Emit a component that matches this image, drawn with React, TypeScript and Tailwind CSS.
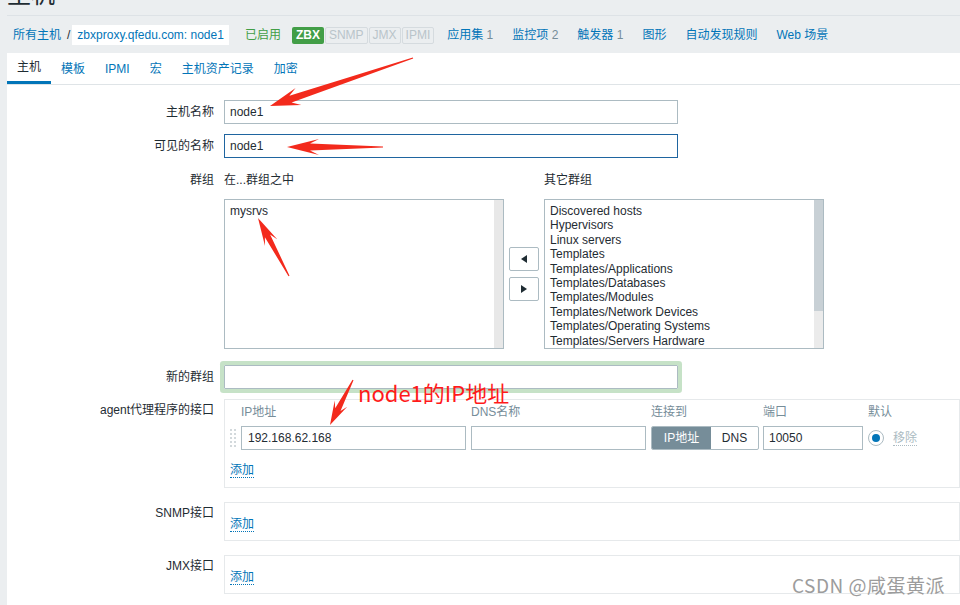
import React from 'react';

const tabs = ['主机', '模板', 'IPMI', '宏', '主机资产记录', '加密'];

const navLinks: [string, string][] = [
  ['应用集', '1'],
  ['监控项', '2'],
  ['触发器', '1'],
  ['图形', ''],
  ['自动发现规则', ''],
  ['Web 场景', ''],
];

const otherGroups = [
  'Discovered hosts',
  'Hypervisors',
  'Linux servers',
  'Templates',
  'Templates/Applications',
  'Templates/Databases',
  'Templates/Modules',
  'Templates/Network Devices',
  'Templates/Operating Systems',
  'Templates/Servers Hardware',
  'Templates/Virtualization',
  'Virtual machines',
  'Zabbix servers',
];

// 红色标注箭头：从尾部到箭头尖端
function arrowPoints(x1: number, y1: number, x2: number, y2: number, head: number, headW: number, shaftW: number) {
  const len = Math.hypot(x2 - x1, y2 - y1);
  const dx = (x2 - x1) / len;
  const dy = (y2 - y1) / len;
  const nx = -dy;
  const ny = dx;
  const bx = x2 - dx * head;
  const by = y2 - dy * head;
  const jx = x2 - dx * head * 0.72;
  const jy = y2 - dy * head * 0.72;
  const pts = [
    [x1 + nx * 0.6, y1 + ny * 0.6],
    [jx + nx * shaftW, jy + ny * shaftW],
    [bx + nx * headW, by + ny * headW],
    [x2, y2],
    [bx - nx * headW, by - ny * headW],
    [jx - nx * shaftW, jy - ny * shaftW],
    [x1 - nx * 0.6, y1 - ny * 0.6],
  ];
  return pts.map((p) => `${p[0].toFixed(1)},${p[1].toFixed(1)}`).join(' ');
}

function Label({ children, tall }: { children: React.ReactNode; tall?: boolean }) {
  return (
    <div className={`w-[207px] shrink-0 text-right ${tall ? 'leading-[24px]' : 'leading-[14px] pt-[4px]'}`}>
      {children}
    </div>
  );
}

function AddLink() {
  return (
    <span className="text-[#0275b8] leading-[14px] border-b border-dotted border-[#0275b8]">添加</span>
  );
}

export default function App() {
  return (
    <div className="relative flex flex-col w-[960px] h-[605px] overflow-hidden bg-[#ebeef0] text-[12px] text-[#1f2c33] font-['Liberation_Sans','Noto_Sans_CJK_SC',sans-serif]">
      {/* 页面标题 */}
      <div className="h-[16px] ml-[7px] shrink-0 border-b border-[#dde2e6]">
        <div className="mt-[-17px] text-[24px] leading-[24px]">主机</div>
      </div>

      {/* 面包屑 / 导航 */}
      <div className="mt-[9px] h-[20px] ml-[13px] flex items-center shrink-0 whitespace-nowrap">
        <span className="text-[#0275b8]">所有主机</span>
        <span className="ml-[6px] text-[#1f2c33]">/</span>
        <span className="ml-[2px] h-[20px] bg-white px-[5px] flex items-center text-[#0275b8]">zbxproxy.qfedu.com: node1</span>
        <span className="ml-[16px] text-[#429e47]">已启用</span>
        <div className="ml-[11px] flex items-center gap-[1px]">
          <span className="h-[17px] px-[4px] flex items-center bg-[#429e47] text-white font-bold rounded-[2px]">ZBX</span>
          <span className="h-[17px] px-[3px] flex items-center text-[#b9c4ca] border border-[#d5dbdf] rounded-[2px]">SNMP</span>
          <span className="h-[17px] px-[3px] flex items-center text-[#b9c4ca] border border-[#d5dbdf] rounded-[2px]">JMX</span>
          <span className="h-[17px] px-[3px] flex items-center text-[#b9c4ca] border border-[#d5dbdf] rounded-[2px]">IPMI</span>
        </div>
        <div className="ml-[13px] flex items-center gap-[19px]">
          {navLinks.map(([name, count]) => (
            <span key={name}>
              <span className="text-[#0275b8]">{name}</span>
              {count && <span className="text-[#768d99]"> {count}</span>}
            </span>
          ))}
        </div>
      </div>

      {/* 主面板 */}
      <div className="mt-[8px] ml-[7px] flex-1 bg-white">
        <div className="h-[32px] flex border-b border-[#dfe4e7]">
          {tabs.map((t, i) => (
            <div
              key={t}
              className={`px-[10px] flex items-center ${
                i === 0 ? 'border-b-[3px] border-[#0275b8] text-[#1f2c33]' : 'text-[#0275b8]'
              }`}
            >
              {t}
            </div>
          ))}
        </div>

        <div className="pt-[15px]">
          {/* 主机名称 */}
          <div className="flex">
            <Label tall>主机名称</Label>
            <div className="ml-[10px] w-[454px] h-[24px] border border-[#acbbc2] px-[5px] flex items-center">node1</div>
          </div>

          {/* 可见的名称 */}
          <div className="flex mt-[10px]">
            <Label tall>可见的名称</Label>
            <div className="ml-[10px] w-[454px] h-[24px] border border-[#1f65a0] px-[5px] flex items-center">node1</div>
          </div>

          {/* 群组 */}
          <div className="flex mt-[15px]">
            <div className="w-[207px] shrink-0 text-right leading-[14px]">群组</div>
            <div className="ml-[10px]">
              <div className="flex leading-[14px]">
                <div className="w-[320px]">在...群组之中</div>
                <div>其它群组</div>
              </div>
              <div className="flex mt-[12px]">
                <div className="w-[280px] h-[150px] border border-[#acbbc2] flex">
                  <div className="flex-1 pl-[5px] pt-[4px] leading-[14.4px]">mysrvs</div>
                  <div className="w-[9px] bg-[#e8e8e8]" />
                </div>
                <div className="w-[40px] flex flex-col items-center justify-center gap-[6px]">
                  <div className="w-[30px] h-[24px] border border-[#acbbc2] rounded-[2px] flex items-center justify-center">
                    <svg width="6" height="8" viewBox="0 0 6 8">
                      <polygon points="6,0 6,8 0,4" fill="#1f2c33" />
                    </svg>
                  </div>
                  <div className="w-[30px] h-[24px] border border-[#acbbc2] rounded-[2px] flex items-center justify-center">
                    <svg width="6" height="8" viewBox="0 0 6 8">
                      <polygon points="0,0 0,8 6,4" fill="#1f2c33" />
                    </svg>
                  </div>
                </div>
                <div className="w-[280px] h-[150px] border border-[#acbbc2] flex">
                  <div className="flex-1 pl-[5px] pt-[4px] leading-[14.4px] overflow-hidden whitespace-nowrap">
                    {otherGroups.map((g) => (
                      <div key={g}>{g}</div>
                    ))}
                  </div>
                  <div className="w-[9px] bg-[#ebebeb]">
                    <div className="h-[111px] bg-[#c8d0d5]" />
                  </div>
                </div>
              </div>
            </div>
          </div>

          {/* 新的群组 */}
          <div className="flex mt-[16px]">
            <Label tall>新的群组</Label>
            <div className="ml-[10px] w-[454px] h-[24px] border border-[#acbbc2] rounded-[1px] shadow-[0_0_0_4px_#c6e2c7]" />
          </div>

          {/* agent代理程序的接口 */}
          <div className="flex mt-[10px]">
            <Label>agent代理程序的接口</Label>
            <div className="ml-[10px] w-[760px] h-[89px] border border-[#e6e9eb] pl-[5px] pt-[5px]">
              <div className="flex leading-[14px] text-[#768d99]">
                <div className="w-[11px]" />
                <div className="w-[225px]">IP地址</div>
                <div className="ml-[5px] w-[175px]">DNS名称</div>
                <div className="ml-[5px] w-[107px]">连接到</div>
                <div className="ml-[5px] w-[100px]">端口</div>
                <div className="ml-[5px]">默认</div>
              </div>
              <div className="flex items-center mt-[7px] h-[24px]">
                <svg width="6" height="20" viewBox="0 0 6 20" className="shrink-0">
                  {[1, 5, 9, 13, 17].map((y) => (
                    <g key={y} fill="#d3d9dc">
                      <rect x="0" y={y} width="2" height="2" />
                      <rect x="4" y={y} width="2" height="2" />
                    </g>
                  ))}
                </svg>
                <div className="ml-[5px] w-[225px] h-[24px] border border-[#acbbc2] px-[6px] flex items-center">192.168.62.168</div>
                <div className="ml-[5px] w-[175px] h-[24px] border border-[#acbbc2]" />
                <div className="ml-[5px] w-[108px] h-[24px] flex rounded-[2px] border border-[#acbbc2] overflow-hidden">
                  <div className="w-[59px] bg-[#768d99] text-white flex items-center justify-center">IP地址</div>
                  <div className="flex-1 flex items-center justify-center">DNS</div>
                </div>
                <div className="ml-[4px] w-[100px] h-[24px] border border-[#acbbc2] px-[5px] flex items-center">10050</div>
                <div className="ml-[5px] w-[16px] h-[16px] rounded-full border border-[#acbbc2] flex items-center justify-center">
                  <div className="w-[8px] h-[8px] rounded-full bg-[#0275b8]" />
                </div>
                <span className="ml-[9px] text-[#acbbc2] leading-[14px] border-b border-dotted border-[#acbbc2]">移除</span>
              </div>
              <div className="mt-[11px]">
                <AddLink />
              </div>
            </div>
          </div>

          {/* SNMP接口 */}
          <div className="flex mt-[14px]">
            <Label>SNMP接口</Label>
            <div className="ml-[10px] w-[760px] h-[39px] border border-[#e6e9eb] pl-[5px] pt-[12px]">
              <AddLink />
            </div>
          </div>

          {/* JMX接口 */}
          <div className="flex mt-[14px]">
            <Label>JMX接口</Label>
            <div className="ml-[10px] w-[760px] h-[39px] border border-[#e6e9eb] pl-[5px] pt-[12px]">
              <AddLink />
            </div>
          </div>
        </div>
      </div>

      {/* 红色标注 */}
      <svg className="absolute left-0 top-0 pointer-events-none" width="960" height="605">
        <polygon points={arrowPoints(413, 58, 270, 106, 30, 9, 3.5)} fill="#f32a1c" />
        <polygon points={arrowPoints(383, 147, 287, 147, 32, 8, 3.5)} fill="#f32a1c" />
        <polygon points={arrowPoints(289, 276, 258, 218, 28, 7, 3)} fill="#f32a1c" />
        <polygon points={arrowPoints(353, 380, 330, 425, 24, 7, 3)} fill="#f32a1c" />
      </svg>
      <div className="absolute left-[358px] top-[378px] text-[22px] leading-[28px] text-[#ff1a1a] font-['Noto_Sans_CJK_SC',sans-serif] whitespace-nowrap">
        node1的IP地址
      </div>

      {/* 水印 */}
      <div className="absolute left-[792px] top-[572px] text-[19px] leading-[26px] tracking-[0.5px] text-[#9c9c9c] font-['Noto_Sans_CJK_SC',sans-serif] whitespace-nowrap">
        CSDN @咸蛋黄派
      </div>
    </div>
  );
}
